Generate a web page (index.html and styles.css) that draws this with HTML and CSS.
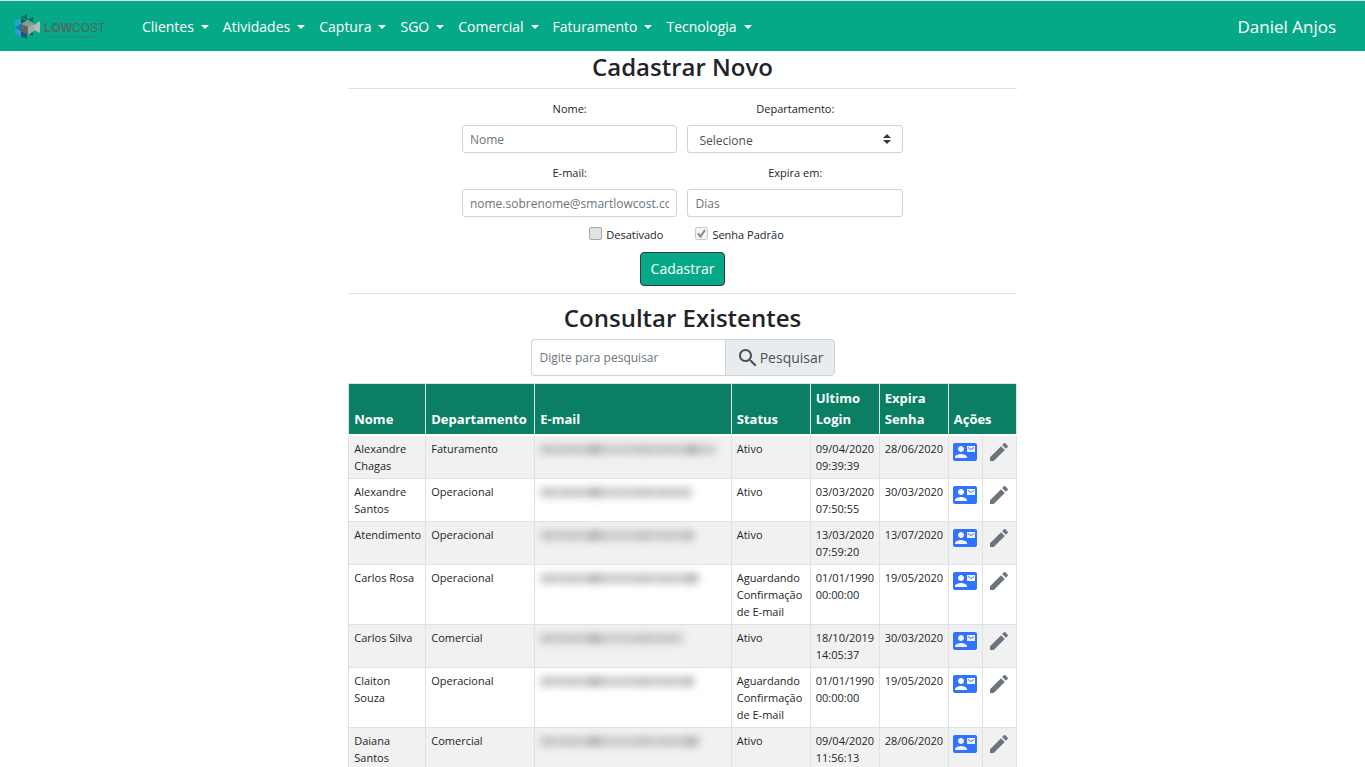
FILE: index.html
```html
<!DOCTYPE html>
<html lang="pt-BR">
<head>
<meta charset="utf-8">
<title>Cadastro de Usuários</title>
<meta name="viewport" content="width=device-width, initial-scale=1">
<link rel="stylesheet" href="styles.css">
</head>
<body>
<svg class="sprite" aria-hidden="true">
  <symbol id="card" viewBox="0 0 24 24"><path fill="#2f73ff" d="M22 3H2C.9 3 0 3.900 0 5v14c0 1.100.9 2 2 2h20c1.100 0 1.990-.9 1.990-2L24 5c0-1.100-.9-2-2-2zM8 6c1.660 0 3 1.340 3 3s-1.340 3-3 3-3-1.340-3-3 1.340-3 3-3zm6 12H2v-1c0-2 4-3.100 6-3.100s6 1.100 6 3.100v1zm8-6h-8V6h8v6zm-1-5l-3 2-3-2v1l3 2 3-2V7z"/></symbol>
  <symbol id="pencil" viewBox="0 0 24 24"><path fill="#6c757d" d="M3 17.250V21h3.750L17.810 9.940l-3.750-3.750L3 17.250zM20.710 7.040c.39-.39.39-1.020 0-1.410l-2.340-2.340c-.39-.39-1.020-.39-1.410 0l-1.830 1.830 3.750 3.750 1.830-1.830z"/></symbol>
</svg>
<header class="navbar">
  <a class="brand" href="#" aria-label="Lowcost">
    <svg class="logo" viewBox="0 0 92 26">
      <path fill="#2a9fd0" d="M0 7l6 3-6 3zM0 14l6 3-6 3zM6 4v6l-6-3zM6 17v6l-6-3z"/>
      <path fill="#1679ab" d="M6 10v7l-6-3.500zM6 17l6 3-6 5z"/>
      <path fill="#0a6b5b" d="M12 0v6L6 3zM6 4l6 3-6 3zM12 6l6-3v5zM18 3v5l-6-2zM12 19l6-3v6z"/>
      <path fill="#14587c" d="M6 17l6 2v6l-6-3z"/>
      <path fill="#8b9896" d="M6 10l7-4 6 4-6 3z"/>
      <path fill="#5c6667" d="M6 10l7 3v8l-7-4z"/>
      <path fill="#a2aca9" d="M13 13l6-3v7l-6 4z"/>
      <path fill="#b1b8b5" d="M19 11l6-4v12l-6-3z"/>
      <text class="logo-name" x="29" y="18"><tspan class="logo-low">LOW</tspan>COST</text>
      <text class="logo-tag" x="30" y="24">Document Solution Integrator</text>
    </svg>
  </a>
  <nav class="menu">
    <button type="button">Clientes</button>
    <button type="button">Atividades</button>
    <button type="button">Captura</button>
    <button type="button">SGO</button>
    <button type="button">Comercial</button>
    <button type="button">Faturamento</button>
    <button type="button">Tecnologia</button>
  </nav>
  <a class="user" href="#">Daniel Anjos</a>
</header>
<main class="content">
  <h1>Cadastrar Novo</h1>
  <form class="register">
    <div class="fields">
      <div class="field"><label for="nome">Nome:</label><input id="nome" type="text" placeholder="Nome"></div>
      <div class="field"><label for="dep">Departamento:</label><select id="dep"><option>Selecione</option></select></div>
      <div class="field"><label for="email">E-mail:</label><input id="email" type="email" placeholder="nome.sobrenome@smartlowcost.com.br"></div>
      <div class="field"><label for="dias">Expira em:</label><input id="dias" type="text" placeholder="Dias"></div>
    </div>
    <div class="checks">
      <label><input type="checkbox">Desativado</label>
      <label><input type="checkbox" checked disabled>Senha Padrão</label>
    </div>
    <button class="submit" type="submit">Cadastrar</button>
  </form>
  <h2>Consultar Existentes</h2>
  <form class="search">
    <input type="search" aria-label="Digite para pesquisar" placeholder="Digite para pesquisar">
    <button type="submit"><svg viewBox="0 0 24 24" aria-hidden="true"><path fill="#495057" d="M15.500 14h-.79l-.28-.27C15.410 12.590 16 11.110 16 9.500 16 5.910 13.090 3 9.500 3S3 5.910 3 9.500 5.910 16 9.500 16c1.610 0 3.090-.59 4.230-1.570l.27.28v.79l5 4.990L20.490 19l-4.990-5zm-6 0C7.010 14 5 11.990 5 9.500S7.010 5 9.500 5 14 7.010 14 9.500 11.990 14 9.500 14z"/></svg>Pesquisar</button>
  </form>
  <table>
    <colgroup><col class="c-name"><col class="c-dep"><col class="c-mail"><col class="c-status"><col class="c-date"><col class="c-date"><col class="c-act"><col class="c-act"></colgroup>
    <thead><tr><th>Nome</th><th>Departamento</th><th>E-mail</th><th>Status</th><th>Ultimo Login</th><th>Expira Senha</th><th colspan="2">Ações</th></tr></thead>
    <tbody id="rows"></tbody>
  </table>
</main>
<script src="app.js"></script>
</body>
</html>
```
FILE: app.js
```js
const waiting = 'Aguardando Confirmação de E-mail';
const users = [
  ['Alexandre Chagas', 'Faturamento', 176, 'Ativo', '09/04/2020 09:39:39', '28/06/2020'],
  ['Alexandre Santos', 'Operacional', 151, 'Ativo', '03/03/2020 07:50:55', '30/03/2020'],
  ['Atendimento', 'Operacional', 154, 'Ativo', '13/03/2020 07:59:20', '13/07/2020'],
  ['Carlos Rosa', 'Operacional', 159, waiting, '01/01/1990 00:00:00', '19/05/2020'],
  ['Carlos Silva', 'Comercial', 144, 'Ativo', '18/10/2019 14:05:37', '30/03/2020'],
  ['Claiton Souza', 'Operacional', 154, waiting, '01/01/1990 00:00:00', '19/05/2020'],
  ['Daiana Santos', 'Comercial', 159, 'Ativo', '09/04/2020 11:56:13', '28/06/2020']
];
document.getElementById('rows').innerHTML = users.map(([name, dep, mail, status, login, expires]) => `
  <tr>
    <td>${name}</td><td>${dep}</td>
    <td><span class="masked" style="width:${mail}px"></span></td>
    <td>${status}</td><td>${login}</td><td>${expires}</td>
    <td class="act"><button type="button" aria-label="Contato"><svg><use href="#card"/></svg></button></td>
    <td class="act"><button type="button" aria-label="Editar"><svg><use href="#pencil"/></svg></button></td>
  </tr>`).join('');
```
FILE: styles.css
```css
* { box-sizing: border-box; }
body { margin: 0; background: #fff; color: #212529; font: 14px/24px "Open Sans", "Noto Sans", sans-serif; }
button, input, select { font: inherit; }
.sprite { position: absolute; width: 0; height: 0; }

.navbar { display: flex; align-items: center; height: 51px; padding: 2px 29px 0 15px; background: #06a987; border-top: 1px solid #d5e5e1; }
.brand { display: flex; margin-right: 28px; }
.logo { width: 92px; height: 26px; }
.logo-name { font: 12px "Liberation Sans", sans-serif; fill: #4f6865; }
.logo-low { font-weight: 700; }
.logo-tag { font: 4px "Liberation Sans", sans-serif; fill: #3b7d70; }
.menu { display: flex; flex: 1; }
.menu button { display: flex; align-items: center; padding: 0 7px; border: 0; background: none; color: #fff; }
.menu button::after { content: ""; margin-left: 7px; border-top: 4px solid; border-left: 4px solid transparent; border-right: 4px solid transparent; }
.user { color: #fff; font-size: 17px; text-decoration: none; }

.content { width: 50%; margin: 0 auto; padding: 0 7px; }
h1, h2 { margin: 0; font-size: 24px; line-height: 32px; font-weight: 600; text-align: center; }
h1 { padding-bottom: 5px; }
.register { display: flex; flex-direction: column; align-items: center; padding: 8px 0 7px; border: solid #dee2e6; border-width: 1px 0; }
.fields { display: grid; grid-template-columns: 1fr 1fr; gap: 8px 10px; width: 66%; }
.field { display: flex; flex-direction: column; gap: 4px; min-width: 0; }
.field label { font-size: 11px; text-align: center; }
.field input, .field select { width: 100%; height: 28px; padding: 0 7px; border: 1px solid #ced4da; border-radius: 3px; background: #fff; color: #495057; font-size: 12px; }
input::placeholder { color: #6c757d; opacity: 1; }
.field select { appearance: none; padding: 3px 11px 0; background: url("data:image/svg+xml,%3Csvg xmlns='http://www.w3.org/2000/svg' viewBox='0 0 4 5'%3E%3Cpath fill='%23343a40' d='M2 0L0 2h4zm0 5L0 3h4z'/%3E%3C/svg%3E") no-repeat right 11px center / 8px 10px; }
.checks { display: flex; gap: 32px; margin-top: 6px; padding-left: 8px; font-size: 11px; }
.checks label { display: flex; align-items: center; gap: 4px; }
.checks input { appearance: none; width: 13px; height: 13px; margin: 0 0 4px; border: 1px solid #a6a6a6; border-radius: 2px; background: #e2e2e2; }
.checks input:disabled { border-color: #ccc; background: #f3f3f3 url("data:image/svg+xml,%3Csvg xmlns='http://www.w3.org/2000/svg' viewBox='0 0 11 11'%3E%3Cpath fill='none' stroke='%23888' stroke-width='2' d='M2 5.500l2.500 3L9 2'/%3E%3C/svg%3E"); }
.submit { height: 34px; margin-top: 5px; padding: 0 10px; border: 1px solid #343a40; border-radius: 4px; background: #06a987; color: #fff; }

h2 { padding-top: 8px; }
.search { display: flex; width: 304px; height: 37px; margin: 5px auto 7px; }
.search input { flex: 1; min-width: 0; padding: 0 8px; border: 1px solid #ced4da; border-right: 0; border-radius: 4px 0 0 4px; font-size: 12px; appearance: none; }
.search button { display: flex; align-items: center; padding: 0 10px; border: 1px solid #ced4da; border-radius: 0 4px 4px 0; background: #e9ecef; color: #495057; }
.search svg { width: 24px; height: 24px; }

table { width: 100%; table-layout: fixed; border-collapse: collapse; font-size: 11px; line-height: 17px; }
.c-name { width: 77px; }
.c-dep { width: 109px; }
.c-status { width: 79px; }
.c-date { width: 69px; }
.c-act { width: 34px; }
th, td { padding: 4px 3px 4px 5px; border: 1px solid #dee2e6; text-align: left; vertical-align: top; }
th { background: #0a7f63; color: #fff; font-size: 13px; font-weight: 700; line-height: 21px; vertical-align: bottom; border-bottom: 2px solid #fff; }
tbody tr:nth-child(odd) { background: #f1f1f1; }
.masked { display: block; height: 9px; margin-top: 5px; max-width: 100%; border-radius: 4px; filter: blur(4px); background: repeating-linear-gradient(90deg, #bbb 0 14px, #ccc 14px 19px, #c0c0c0 19px 43px, #ccc 43px 48px, #a8a8a8 48px 61px, #c4c4c4 61px 97px); }
td.act { padding: 4px; }
.act button { display: block; padding: 0; border: 0; background: none; }
.act svg { display: block; width: 24px; height: 24px; }
```
